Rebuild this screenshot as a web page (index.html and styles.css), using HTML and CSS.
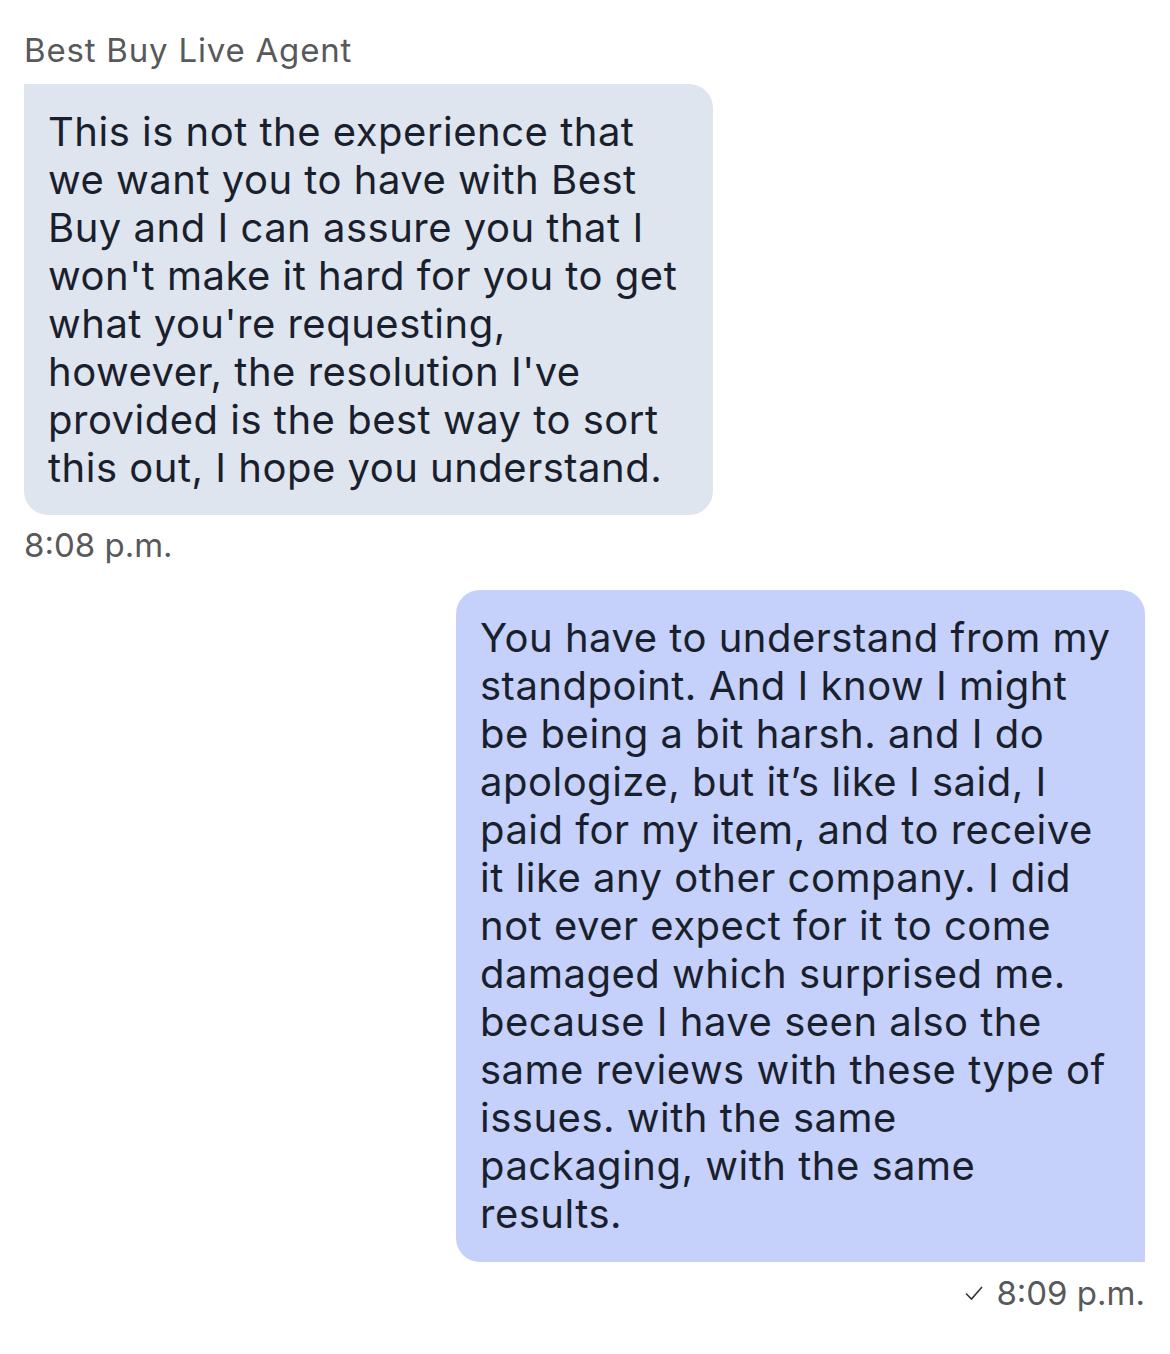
FILE: index.html
```html
<!DOCTYPE html>
<html>
<head>
<meta charset="utf-8">
<link rel="stylesheet" href="styles.css">
</head>
<body>
<div class="chat">
  <div class="sender">Best Buy Live Agent</div>
  <div class="msg agent">This is not the experience that<br>we want you to have with Best<br>Buy and I can assure you that I<br>won't make it hard for you to get<br>what you're requesting,<br>however, the resolution I've<br>provided is the best way to sort<br>this out, I hope you understand.</div>
  <div class="time">8:08 p.m.</div>
  <div class="msg user">You have to understand from my<br>standpoint. And I know I might<br>be being a bit harsh. and I do<br>apologize, but it’s like I said, I<br>paid for my item, and to receive<br>it like any other company. I did<br>not ever expect for it to come<br>damaged which surprised me.<br>because I have seen also the<br>same reviews with these type of<br>issues. with the same<br>packaging, with the same<br>results.</div>
  <div class="time right"><svg class="check" width="20" height="16" viewBox="0 0 20 16"><path d="M2 8.5 L7.5 14 L18 2" fill="none" stroke="#333" stroke-width="1.6"/></svg>8:09 p.m.</div>
</div>
</body>
</html>
```
FILE: styles.css
```css
html, body {
  margin: 0;
  padding: 0;
  background: #ffffff;
}
.chat {
  display: flex;
  flex-direction: column;
  padding: 30px 25px 0 24px;
  font-family: Inter, "Open Sans", sans-serif;
}
.sender {
  font-size: 33px;
  line-height: 40px;
  letter-spacing: 0.8px;
  color: #58595b;
  margin-bottom: 14px;
}
.msg {
  width: 689px;
  box-sizing: border-box;
  padding: 24px 24px 23px 24px;
  font-size: 40px;
  line-height: 48px;
  letter-spacing: 0.5px;
  color: #1a1f2d;
  border-radius: 24px;
}
.agent {
  align-self: flex-start;
  background: #dfe5ef;
  border-top-left-radius: 0;
}
.user {
  align-self: flex-end;
  background: #c5d1fa;
  border-bottom-right-radius: 0;
  padding-bottom: 24px;
}
.time {
  font-size: 33px;
  line-height: 40px;
  color: #58595b;
  margin-top: 10px;
  margin-bottom: 25px;
}
.time.right {
  align-self: flex-end;
  display: flex;
  align-items: center;
  gap: 12px;
  margin-top: 11px;
}
.check {
  display: block;
}
```
